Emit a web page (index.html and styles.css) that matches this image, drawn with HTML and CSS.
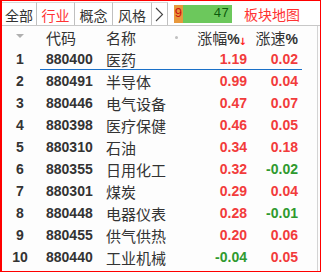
FILE: index.html
```html
<!DOCTYPE html>
<html>
<head>
<meta charset="utf-8">
<link rel="stylesheet" href="styles.css">
</head>
<body>
<div class="panel">
  <div class="tabs">
    <div class="tab t1">全部</div>
    <div class="tab t2 active">行业</div>
    <div class="tab t3">概念</div>
    <div class="tab t4">风格</div>
    <div class="tab more"><svg width="9" height="15" viewBox="0 0 9 15"><polyline points="1,1 7.5,7.5 1,14" fill="none" stroke="#444" stroke-width="1.1"/></svg></div>
    <div class="bar"><span class="fall" style="width:9px">9</span><span class="rise">47</span></div>
    <div class="map">板块地图</div>
  </div>
  <div class="body">
    <div class="row head">
      <div class="c-num"><span class="tri"></span></div>
      <div class="c-code">代码</div>
      <div class="c-name">名称<span class="dot"></span></div>
      <div class="c-pct">涨幅<b>%</b><span class="arrow">↓</span></div>
      <div class="c-spd">涨速<b>%</b></div>
    </div>
    <div class="row sel"><div class="c-num">1</div><div class="c-code">880400</div><div class="c-name">医药</div><div class="c-pct up">1.19</div><div class="c-spd up">0.02</div></div>
    <div class="row"><div class="c-num">2</div><div class="c-code">880491</div><div class="c-name">半导体</div><div class="c-pct up">0.99</div><div class="c-spd up">0.04</div></div>
    <div class="row"><div class="c-num">3</div><div class="c-code">880446</div><div class="c-name">电气设备</div><div class="c-pct up">0.47</div><div class="c-spd up">0.07</div></div>
    <div class="row"><div class="c-num">4</div><div class="c-code">880398</div><div class="c-name">医疗保健</div><div class="c-pct up">0.46</div><div class="c-spd up">0.05</div></div>
    <div class="row"><div class="c-num">5</div><div class="c-code">880310</div><div class="c-name">石油</div><div class="c-pct up">0.34</div><div class="c-spd up">0.18</div></div>
    <div class="row"><div class="c-num">6</div><div class="c-code">880355</div><div class="c-name">日用化工</div><div class="c-pct up">0.32</div><div class="c-spd down">-0.02</div></div>
    <div class="row"><div class="c-num">7</div><div class="c-code">880301</div><div class="c-name">煤炭</div><div class="c-pct up">0.29</div><div class="c-spd up">0.04</div></div>
    <div class="row"><div class="c-num">8</div><div class="c-code">880448</div><div class="c-name">电器仪表</div><div class="c-pct up">0.28</div><div class="c-spd down">-0.01</div></div>
    <div class="row"><div class="c-num">9</div><div class="c-code">880455</div><div class="c-name">供气供热</div><div class="c-pct up">0.20</div><div class="c-spd up">0.06</div></div>
    <div class="row"><div class="c-num">10</div><div class="c-code">880440</div><div class="c-name">工业机械</div><div class="c-pct down">-0.04</div><div class="c-spd up">0.05</div></div>
  </div>
</div>
</body>
</html>
```
FILE: styles.css
```css
html, body {
  margin: 0;
  padding: 0;
  background: #ffffff;
}
.panel {
  box-sizing: border-box;
  width: 321px;
  height: 272px;
  border-top: 1px solid #ff0000;
  border-left: 2px solid #ff0000;
  border-right: 1px solid #ff0000;
  border-bottom: 1px solid #ff0000;
  background: #fdfdfd;
  font-family: "Noto Sans CJK SC", "Liberation Sans", sans-serif;
  color: #333;
  overflow: hidden;
}
.tabs {
  display: flex;
  align-items: stretch;
  height: 25px;
  box-sizing: border-box;
  border-bottom: 1px solid #c8c8c8;
  background: #ffffff;
}
.tab {
  box-sizing: border-box;
  border-right: 1px solid #c0c0c0;
  border-top: 1px solid #d8d8d8;
  margin-top: 1px;
  display: flex;
  align-items: center;
  justify-content: center;
  font-size: 14px;
  line-height: 1;
  padding-top: 2px;
  color: #333;
}
.t1 { width: 35px; }
.t2 { width: 38px; }
.t3 { width: 38px; }
.t4 { width: 39px; }
.more { width: 16px; padding-top: 1px; }
.tab.active { color: #ff3333; }
.bar {
  margin: 4px 0 2px 6px;
  width: 58px;
  height: 18px;
  display: flex;
  background: #6cc85c;
  font-family: "Liberation Mono", monospace;
  font-size: 13px;
  line-height: 18px;
}
.bar .fall {
  background: #e8983c;
  color: #cc1010;
  text-align: center;
}
.bar .rise {
  flex: 1;
  text-align: right;
  padding-right: 3px;
  color: #0c5a0c;
}
.map {
  margin-left: 12px;
  color: #ff3333;
  font-size: 14px;
  display: flex;
  align-items: center;
  padding-top: 1px;
}
.body {
  height: 245px;
  box-sizing: border-box;
  border-right: 1px solid #d4d4d4;
  width: 316px;
}
.row {
  display: grid;
  grid-template-columns: 44px 60px 80px 61px 51px;
  height: 22px;
  align-items: center;
  font-family: "Liberation Sans", Arial, sans-serif;
  font-weight: bold;
  font-size: 14px;
  color: #333;
  position: relative;
}
.row > div { white-space: nowrap; }
.c-num { text-align: center; padding-right: 8px; }
.c-name {
  font-family: "Noto Sans CJK SC", sans-serif;
  font-weight: normal;
  font-size: 15px;
  color: #333;
  position: relative;
}
.c-pct, .c-spd { text-align: right; }
.up { color: #f23b3b; }
.down { color: #2f9a2f; }
.head .c-code, .head .c-pct, .head .c-spd {
  font-family: "Noto Sans CJK SC", sans-serif;
  font-weight: normal;
  font-size: 15px;
}
.head b {
  font-family: "Liberation Sans", sans-serif;
  font-weight: bold;
  font-size: 14px;
}
.arrow {
  display: inline-block;
  color: #ff2020;
  font-family: "DejaVu Sans", sans-serif;
  font-size: 10px;
  font-weight: bold;
  vertical-align: -1px;
  margin-left: -1px;
}
.tri {
  display: inline-block;
  width: 0;
  height: 0;
  border-left: 4px solid transparent;
  border-right: 4px solid transparent;
  border-top: 4px solid #b0b0b0;
  vertical-align: middle;
  margin-top: -4px;
}
.dot {
  position: absolute;
  left: 69px;
  top: 9px;
  width: 3px;
  height: 3px;
  border-radius: 50%;
  background: #c0c0c0;
}
.sel::after {
  content: "";
  position: absolute;
  left: 38px;
  width: 262px;
  bottom: 0;
  height: 1px;
  background: #1a70c8;
}
```
